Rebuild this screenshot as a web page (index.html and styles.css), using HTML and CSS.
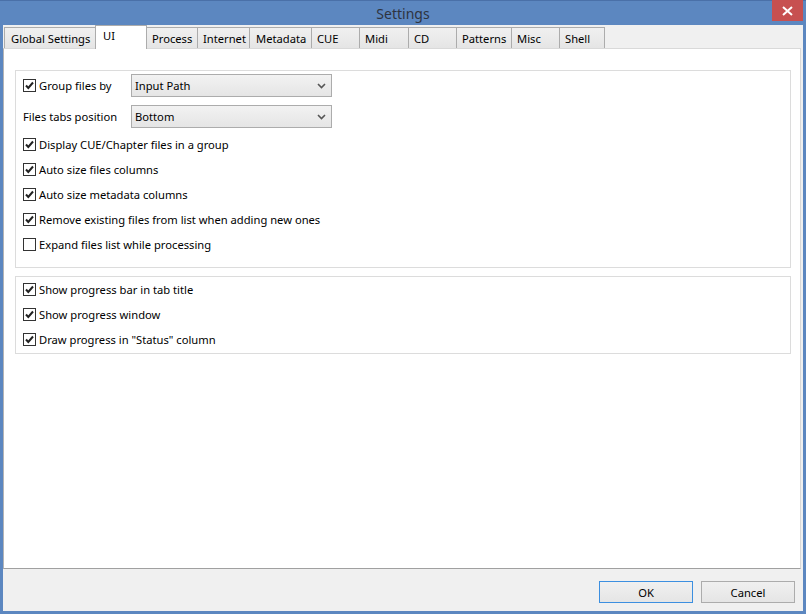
FILE: index.html
```html
<!DOCTYPE html>
<html>
<head>
  <title>Settings</title>
  <meta charset="utf-8" />
  <link rel="stylesheet" href="styles.css">
</head>
<body>
  <div class="window">
    <div class="titlebar">
      <span class="title">Settings</span>
      <span class="close">
        <svg width="11" height="10" viewBox="0 0 11 10"><path d="M1 1 L10 9 M10 1 L1 9" stroke="#fff" stroke-width="2"/></svg>
      </span>
    </div>

    <div class="client">
      <div class="tabs">
        <div class="tab w-global">Global Settings</div>
        <div class="tab active w-ui">UI</div>
        <div class="tab w-process">Process</div>
        <div class="tab w-internet">Internet</div>
        <div class="tab w-metadata">Metadata</div>
        <div class="tab w-cue">CUE</div>
        <div class="tab w-midi">Midi</div>
        <div class="tab w-cd">CD</div>
        <div class="tab w-patterns">Patterns</div>
        <div class="tab w-misc">Misc</div>
        <div class="tab w-shell">Shell</div>
      </div>

      <div class="panel">
        <div class="group first">
          <div class="row combo-row">
            <span class="lbl"><span class="cb on"><svg width="11" height="11" viewBox="0 0 11 11"><path d="M2 5.5 L4.3 8 L9 2.5" fill="none" stroke="#222" stroke-width="2"/></svg></span>Group files by</span>
            <div class="combo">Input Path<span class="chev"><svg width="9" height="6" viewBox="0 0 9 6"><path d="M1 1 L4.5 4.5 L8 1" fill="none" stroke="#555" stroke-width="1.6"/></svg></span></div>
          </div>
          <div class="row combo-row second">
            <span class="lbl">Files tabs position</span>
            <div class="combo">Bottom<span class="chev"><svg width="9" height="6" viewBox="0 0 9 6"><path d="M1 1 L4.5 4.5 L8 1" fill="none" stroke="#555" stroke-width="1.6"/></svg></span></div>
          </div>
          <div class="row check-row gap-top"><span class="cb on"><svg width="11" height="11" viewBox="0 0 11 11"><path d="M2 5.5 L4.3 8 L9 2.5" fill="none" stroke="#222" stroke-width="2"/></svg></span>Display CUE/Chapter files in a group</div>
          <div class="row check-row"><span class="cb on"><svg width="11" height="11" viewBox="0 0 11 11"><path d="M2 5.5 L4.3 8 L9 2.5" fill="none" stroke="#222" stroke-width="2"/></svg></span>Auto size files columns</div>
          <div class="row check-row"><span class="cb on"><svg width="11" height="11" viewBox="0 0 11 11"><path d="M2 5.5 L4.3 8 L9 2.5" fill="none" stroke="#222" stroke-width="2"/></svg></span>Auto size metadata columns</div>
          <div class="row check-row"><span class="cb on"><svg width="11" height="11" viewBox="0 0 11 11"><path d="M2 5.5 L4.3 8 L9 2.5" fill="none" stroke="#222" stroke-width="2"/></svg></span>Remove existing files from list when adding new ones</div>
          <div class="row check-row"><span class="cb"></span>Expand files list while processing</div>
        </div>

        <div class="group second-group">
          <div class="row check-row"><span class="cb on"><svg width="11" height="11" viewBox="0 0 11 11"><path d="M2 5.5 L4.3 8 L9 2.5" fill="none" stroke="#222" stroke-width="2"/></svg></span>Show progress bar in tab title</div>
          <div class="row check-row"><span class="cb on"><svg width="11" height="11" viewBox="0 0 11 11"><path d="M2 5.5 L4.3 8 L9 2.5" fill="none" stroke="#222" stroke-width="2"/></svg></span>Show progress window</div>
          <div class="row check-row"><span class="cb on"><svg width="11" height="11" viewBox="0 0 11 11"><path d="M2 5.5 L4.3 8 L9 2.5" fill="none" stroke="#222" stroke-width="2"/></svg></span>Draw progress in "Status" column</div>
        </div>
      </div>

      <div class="buttons">
        <button class="btn default">OK</button>
        <button class="btn">Cancel</button>
      </div>
    </div>
  </div>
</body>
</html>
```

FILE: styles.css
```css
html, body { margin: 0; padding: 0; }
body { font-family: "Noto Sans", "Open Sans", sans-serif; font-size: 11.2px; color: #000; background: #5c87c0; }

.window { width: 806px; height: 614px; box-sizing: border-box; border-top: 1px solid #4a70a8; display: flex; flex-direction: column; background: #5c87c0; }
.titlebar { height: 24px; position: relative; display: flex; justify-content: center; align-items: center; }
.title { font-size: 14px; color: #2e3440; margin-top: 1px; }
.close { position: absolute; top: -1px; right: 3px; width: 31px; height: 21px; background: #c75050; display: flex; align-items: center; justify-content: center; }

.client { flex: 1; margin: 0 3px 3px 3px; background: #f0f0f0; display: flex; flex-direction: column; }

.tabs { display: flex; align-items: flex-end; height: 23px; padding-left: 1px; position: relative; z-index: 1; }
.tab { box-sizing: border-box; height: 21px; border: 1px solid #acacac; border-bottom: none; background: linear-gradient(#f0f0f0, #e5e5e5); padding: 1px 0 0 5px; line-height: 19px; white-space: nowrap; margin-right: -1px; }
.tab.active { height: 24px; background: #fff; border-color: #acacac; line-height: 18px; padding: 1px 0 3px 7px; margin-bottom: -1px; position: relative; z-index: 2; }
.w-global { width: 92px; padding-left: 6px; }
.w-ui { width: 52px; }
.w-process { width: 52px; }
.w-internet { width: 53px; }
.w-metadata { width: 63px; padding-left: 6px; }
.w-cue { width: 49px; }
.w-midi { width: 50px; }
.w-cd { width: 49px; }
.w-patterns { width: 56px; }
.w-misc { width: 49px; }
.w-shell { width: 46px; }

.panel { height: 521px; box-sizing: border-box; margin-right: 2px; background: #fff; border: 1px solid #d9d9d9; border-bottom-color: #a0a0a0; border-left-color: #b4b4b4; padding: 21px 9px 0 11px; }

.group { border: 1px solid #dcdcdc; padding: 0 0 0 7px; }
.group.first { padding-top: 3px; padding-bottom: 10px; }
.group.second-group { margin-top: 8px; padding-bottom: 1px; }

.row { display: flex; align-items: center; white-space: nowrap; }
.combo-row { height: 23px; }
.combo-row.second { margin-top: 8px; }
.check-row { height: 25px; }
.gap-top { margin-top: 4px; }

.lbl { width: 108px; display: flex; align-items: center; }
.cb { box-sizing: border-box; width: 13px; height: 13px; border: 1px solid #333; background: #fff; margin-right: 3px; display: flex; align-items: center; justify-content: center; flex-shrink: 0; }

.combo { box-sizing: border-box; width: 201px; height: 23px; border: 1px solid #acacac; background: linear-gradient(#f2f2f2, #e5e5e5); padding-left: 3px; line-height: 21px; position: relative; }
.chev { position: absolute; right: 5px; top: 8px; display: flex; }

.buttons { display: flex; justify-content: flex-end; gap: 8px; padding: 12px 8px 0 0; }
.btn { box-sizing: border-box; width: 94px; height: 22px; border: 1px solid #acacac; background: linear-gradient(#f0f0f0, #e5e5e5); font-family: "Noto Sans", "Open Sans", sans-serif; font-size: 11.2px; color: #000; padding: 0; }
.btn.default { border-color: #3c8fe0; }
```
